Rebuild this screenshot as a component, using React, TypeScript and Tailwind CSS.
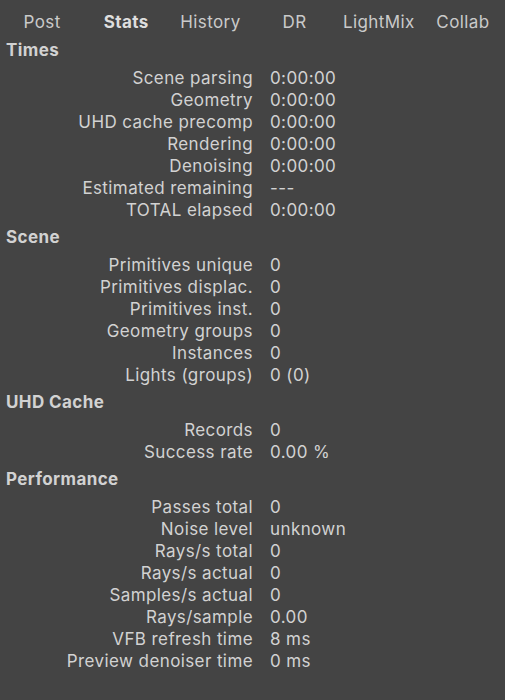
const TABS = ["Post", "Stats", "History", "DR", "LightMix", "Collab"];

const SECTIONS: { title: string; rows: [string, string][] }[] = [
  {
    title: "Times",
    rows: [
      ["Scene parsing", "0:00:00"],
      ["Geometry", "0:00:00"],
      ["UHD cache precomp", "0:00:00"],
      ["Rendering", "0:00:00"],
      ["Denoising", "0:00:00"],
      ["Estimated remaining", "---"],
      ["TOTAL elapsed", "0:00:00"],
    ],
  },
  {
    title: "Scene",
    rows: [
      ["Primitives unique", "0"],
      ["Primitives displac.", "0"],
      ["Primitives inst.", "0"],
      ["Geometry groups", "0"],
      ["Instances", "0"],
      ["Lights (groups)", "0 (0)"],
    ],
  },
  {
    title: "UHD Cache",
    rows: [
      ["Records", "0"],
      ["Success rate", "0.00 %"],
    ],
  },
  {
    title: "Performance",
    rows: [
      ["Passes total", "0"],
      ["Noise level", "unknown"],
      ["Rays/s total", "0"],
      ["Rays/s actual", "0"],
      ["Samples/s actual", "0"],
      ["Rays/sample", "0.00"],
      ["VFB refresh time", "8 ms"],
      ["Preview denoiser time", "0 ms"],
    ],
  },
];

export default function App() {
  return (
    <div className="h-[700px] w-[505px] overflow-hidden bg-[#444444] pt-[1px] font-['Inter',sans-serif] text-[17px] tracking-[0.4px] text-[#d2d2d2]">
      {/* tab strip */}
      <div className="flex h-[33px] pt-[10px]">
        {TABS.map((t) => (
          <div
            key={t}
            className={
              "flex-1 text-center leading-[22px] " +
              (t === "Stats" ? "font-bold text-[#dedede]" : "text-[#cacaca]")
            }
          >
            {t}
          </div>
        ))}
      </div>

      {SECTIONS.map((s) => (
        <div key={s.title}>
          <div className="h-[33px] pl-[6px] pt-[5px] font-bold leading-[22px]">{s.title}</div>
          {s.rows.map(([label, value]) => (
            <div key={label} className="flex h-[22px] leading-[22px]">
              <div className="w-[253px] text-right">{label}</div>
              <div className="pl-[17px]">{value}</div>
            </div>
          ))}
        </div>
      ))}
    </div>
  );
}
